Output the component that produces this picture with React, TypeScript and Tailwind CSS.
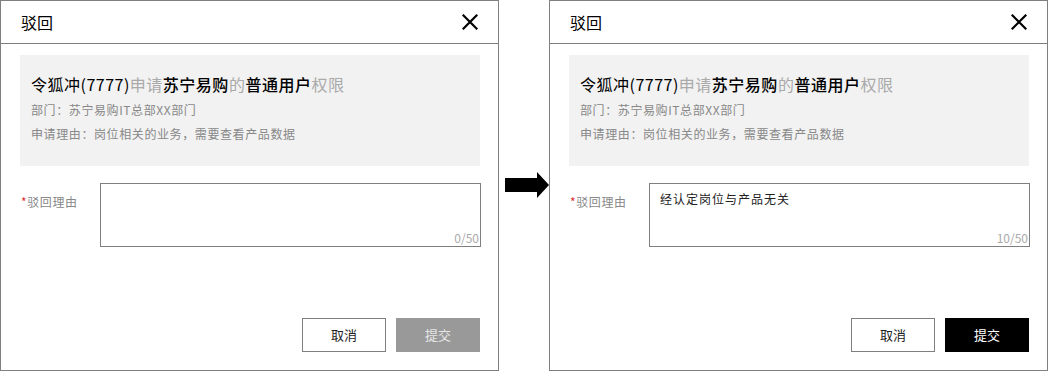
import React from 'react';

const FONT = { fontFamily: '"Noto Sans CJK SC", "Noto Sans", sans-serif' };

type DialogProps = {
  reason: string;
  count: number;
  canSubmit: boolean;
};

const CloseIcon: React.FC = () => (
  <svg width="16" height="16" viewBox="0 0 16 16" fill="none">
    <path d="M1.5 1.5 L14.5 14.5 M14.5 1.5 L1.5 14.5" stroke="#000" strokeWidth="2.2" strokeLinecap="square" />
  </svg>
);

const RejectDialog: React.FC<DialogProps> = ({ reason, count, canSubmit }) => {
  return (
    <div className="w-[499px] h-[371px] shrink-0 border border-[#7f7f7f] bg-white flex flex-col" style={FONT}>
      {/* header */}
      <div className="h-[43px] shrink-0 border-b border-[#7f7f7f] flex items-center justify-between pl-[20px] pr-[20px]">
        <span className="text-[16px] text-black leading-none">驳回</span>
        <CloseIcon />
      </div>

      {/* application summary */}
      <div className="mt-[11px] ml-[19px] w-[460px] h-[111px] bg-[#f2f2f2] pl-[11px] pt-[18px]">
        <div className="text-[16px] leading-[22px] text-[#aaa] whitespace-nowrap tracking-[0.5px]">
          <span className="text-black">令狐冲(7777)</span>
          <span>申请</span>
          <span className="text-black font-medium">苏宁易购</span>
          <span>的</span>
          <span className="text-black font-medium">普通用户</span>
          <span>权限</span>
        </div>
        <div className="mt-[6px] text-[12px] leading-[18px] text-[#888] tracking-[0.6px]">部门：苏宁易购IT总部XX部门</div>
        <div className="mt-[6px] text-[12px] leading-[18px] text-[#888] tracking-[0.6px]">申请理由：岗位相关的业务，需要查看产品数据</div>
      </div>

      {/* reason field */}
      <div className="mt-[17px] flex items-start">
        <div className="w-[99px] shrink-0 pl-[20px] pt-[10px] text-[12px] leading-[18px] text-[#888] tracking-[0.6px]">
          <span className="text-[#e03030]">*</span>驳回理由
        </div>
        <div className="relative w-[381px] h-[64px] border border-[#7f7f7f] bg-white">
          <div className="pl-[10px] pt-[6px] text-[12px] leading-[18px] text-[#222] tracking-[1px]">{reason}</div>
          <span className="absolute right-[1px] bottom-[0px] text-[12px] leading-[16px] text-[#aaa]">{count}/50</span>
        </div>
      </div>

      {/* actions */}
      <div className="mt-auto mb-[18px] pr-[18px] flex justify-end gap-[10px]">
        <button className="w-[84px] h-[34px] border border-[#7f7f7f] bg-white text-[13px] text-[#222]">取消</button>
        <button
          className={
            canSubmit
              ? 'w-[84px] h-[34px] bg-black text-[13px] text-white'
              : 'w-[84px] h-[34px] bg-[#999] text-[13px] text-[#e6e6e6]'
          }
        >
          提交
        </button>
      </div>
    </div>
  );
};

const App: React.FC = () => {
  return (
    <div className="w-[1049px] h-[371px] bg-white flex">
      <RejectDialog reason="" count={0} canSubmit={false} />
      <div className="w-[50px] shrink-0 flex items-center justify-end pb-[2px]">
        <svg width="44" height="26" viewBox="0 0 44 26">
          <path d="M0 6 H32 V0 L44 13 L32 26 V20 H0 Z" fill="#000" />
        </svg>
      </div>
      <RejectDialog reason="经认定岗位与产品无关" count={10} canSubmit={true} />
    </div>
  );
};

export default App;
